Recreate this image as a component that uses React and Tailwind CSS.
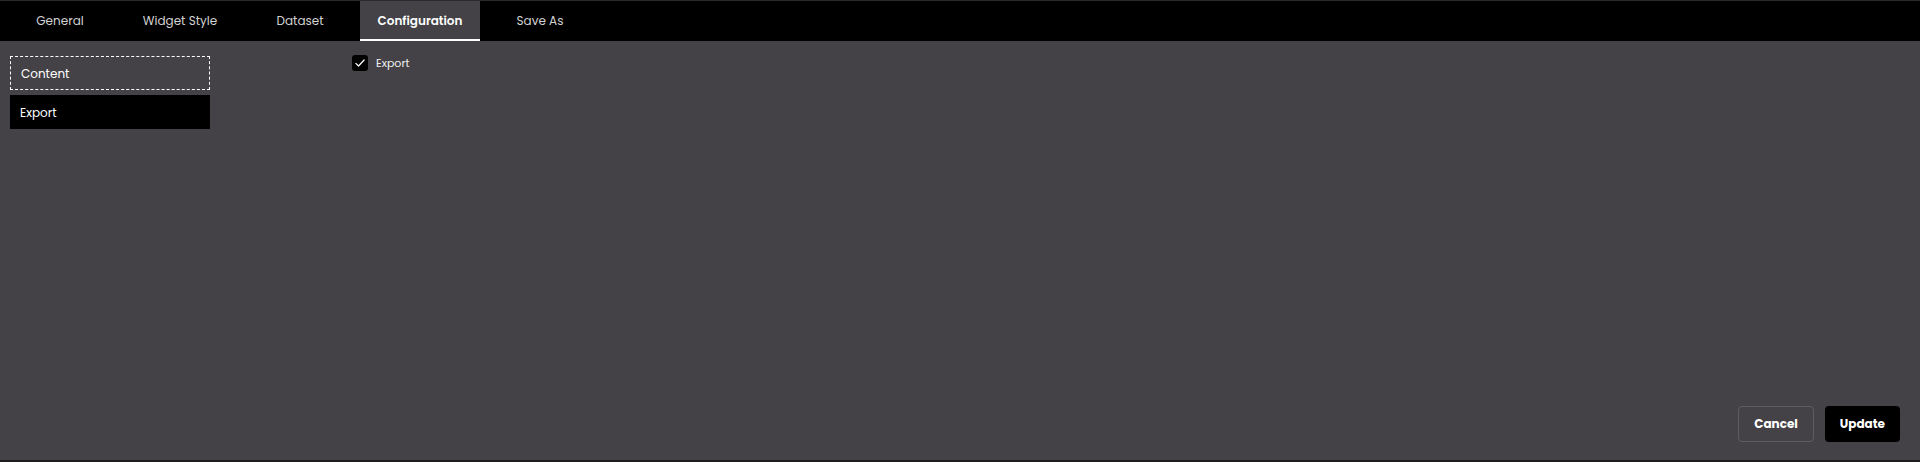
import { useState } from 'react';

const tabs = ['General', 'Widget Style', 'Dataset', 'Configuration', 'Save As'];

function CheckIcon() {
  return (
    <svg viewBox="0 0 16 16" className="w-3 h-3" fill="none" stroke="white" strokeWidth="1.6" strokeLinecap="round" strokeLinejoin="round">
      <path d="M2.5 8.5 L6 12 L13.5 4" />
    </svg>
  );
}

export default function App() {
  const [activeTab, setActiveTab] = useState('Configuration');
  const [section, setSection] = useState('Export');
  const [exportOn, setExportOn] = useState(true);

  return (
    <div
      className="w-full h-[462px] flex flex-col bg-[#444246] border-t border-[#2a2a2a] border-b-2 border-b-[#1e1e1e] text-white"
      style={{ fontFamily: 'Poppins, Inter, "Noto Sans", sans-serif' }}
    >
      <div className="h-10 bg-black flex shrink-0">
        {tabs.map((tab) => (
          <button
            key={tab}
            onClick={() => setActiveTab(tab)}
            className={`w-[120px] h-full pt-[2px] text-[12px] border-b-2 ${
              activeTab === tab
                ? 'bg-[#444246] text-white font-semibold border-white'
                : 'text-[#d2d2d2] border-transparent'
            }`}
          >
            {tab}
          </button>
        ))}
      </div>

      <div className="flex-1 flex flex-col">
        <div className="flex-1 flex">
          <div className="w-[200px] ml-[10px] pt-[15px] flex flex-col gap-[5px]">
            {['Content', 'Export'].map((item) => (
              <button
                key={item}
                onClick={() => setSection(item)}
                className={`h-[34px] text-left pl-[10px] pt-[2px] text-[12px] ${
                  item === 'Content'
                    ? 'border border-dashed border-white'
                    : ''
                } ${section === item ? 'bg-black' : ''}`}
              >
                {item}
              </button>
            ))}
          </div>

          <div className="ml-[142px] pt-[14px]">
            <label className="flex items-center gap-2 cursor-pointer">
              <span
                onClick={() => setExportOn(!exportOn)}
                className="w-4 h-4 rounded-[3px] bg-black flex items-center justify-center"
              >
                {exportOn && <CheckIcon />}
              </span>
              <span className="text-[11px] text-[#f2f2f2]">Export</span>
            </label>
          </div>
        </div>

        <div className="flex justify-end gap-[11px] pr-5 pb-[18px]">
          <button className="h-9 px-[15px] rounded border border-[#5e5d61] text-[12px] font-bold">
            Cancel
          </button>
          <button className="h-9 px-[15px] rounded bg-black text-[12px] font-bold">
            Update
          </button>
        </div>
      </div>
    </div>
  );
}
